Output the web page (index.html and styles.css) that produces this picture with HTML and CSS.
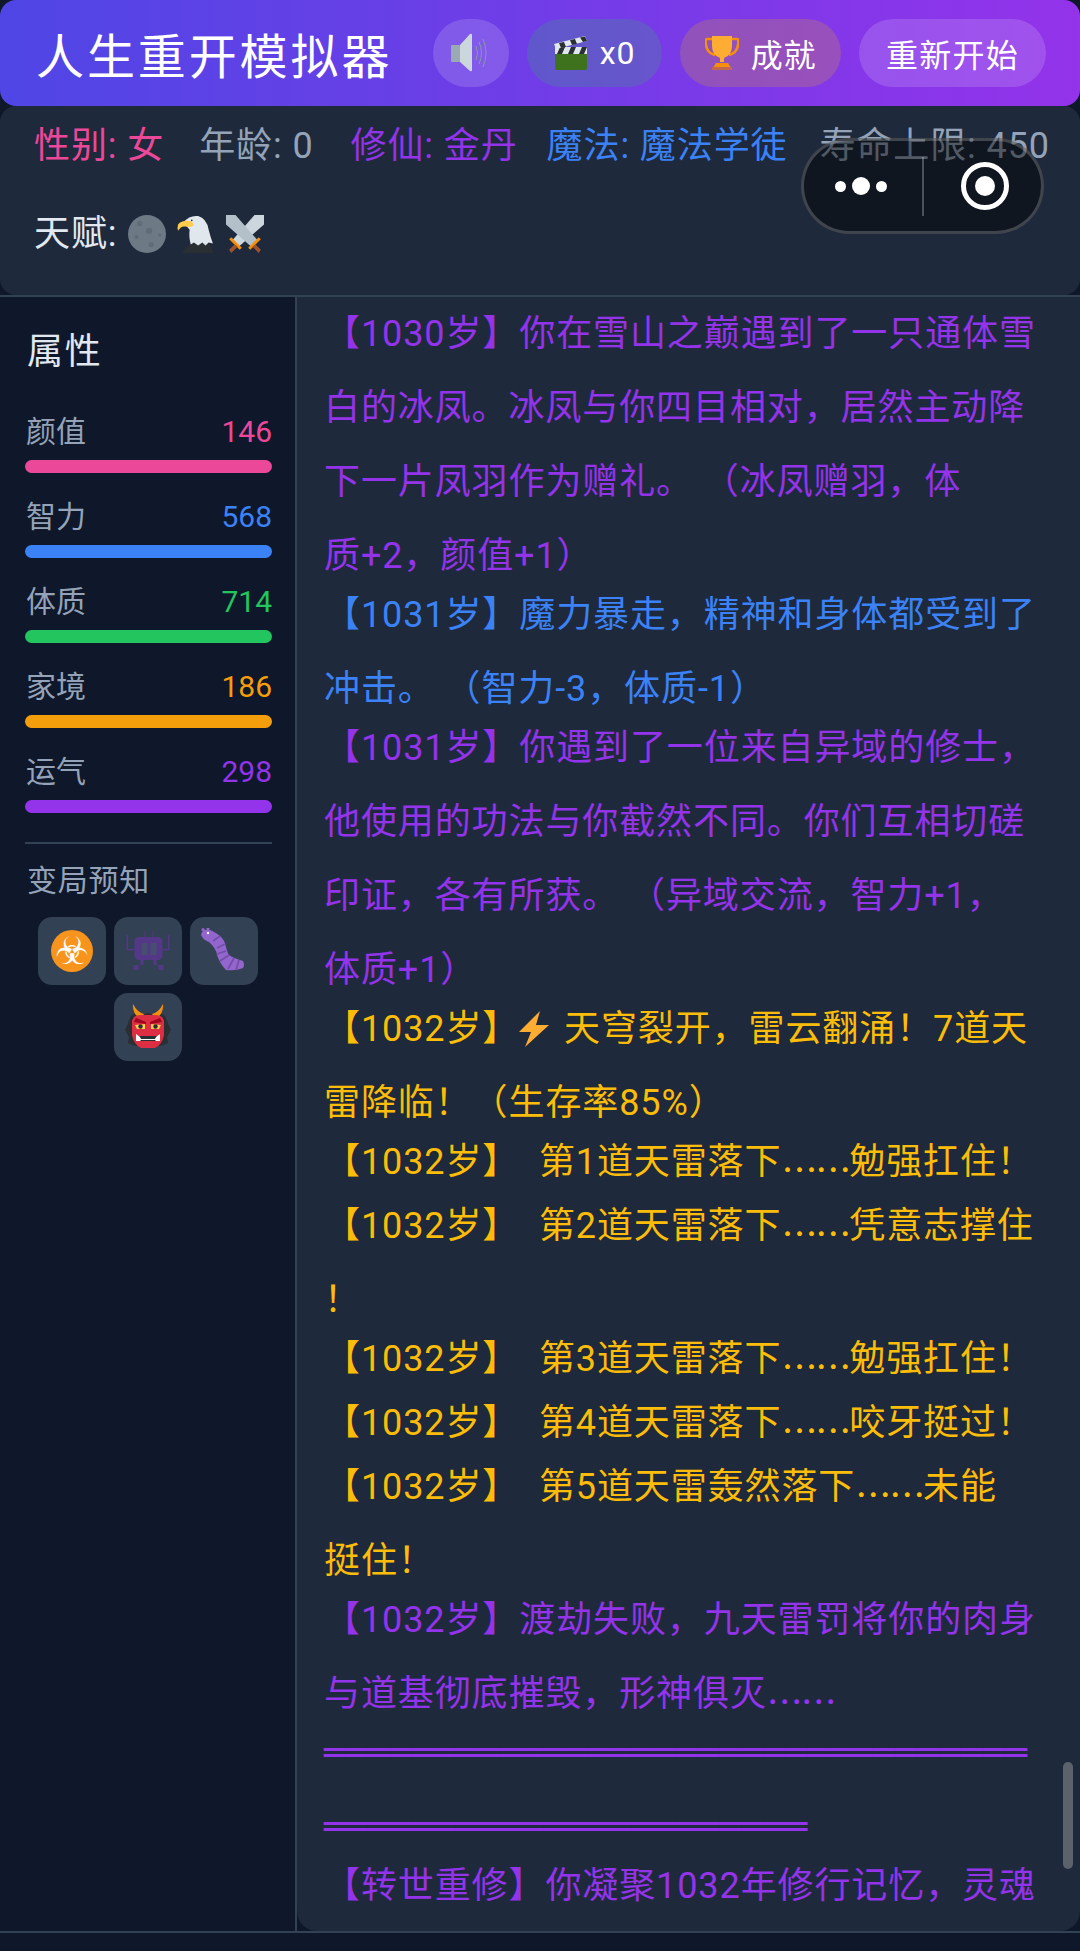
FILE: index.html
```html
<!DOCTYPE html>
<html lang="zh-CN">
<head>
    <meta charset="UTF-8">
    <meta name="viewport" content="width=device-width, initial-scale=1.0">
    <title>人生重开模拟器</title>
    <link rel="stylesheet" href="styles.css">
</head>
<body>
    <div class="app">
        <header class="top-bar">
            <h1 class="title">人生重开模拟器</h1>
            <div class="top-actions">
                <button class="btn btn-sound">
                    <svg class="ico-sound" viewBox="0 0 40 40">
                        <rect x="0" y="12" width="9" height="17" rx="1" fill="#99aab5"/>
                        <path d="M9 12 19 1Q21 0 21 2V37Q21 39 19 38L9 29Z" fill="#ccd6dd"/>
                        <path d="M25 13Q28 20 25 27M28 9Q33 20 28 31M32 6Q38 20 32 34" fill="none" stroke="#8899a6" stroke-width="1"/>
                    </svg>
                </button>
                <button class="btn btn-film">
                    <svg class="ico-md" viewBox="0 0 34 34">
                        <rect x="1" y="17" width="32" height="17" rx="2" fill="#3e721d"/>
                        <rect x="1" y="11" width="32" height="7" fill="#e1e8ed"/>
                        <path d="M6 11h5l-3 7H3zM17 11h5l-3 7h-5zM28 11h5l-3 7h-5z" fill="#292f33"/>
                        <path d="M0 8 31 0l2 5L2 13z" fill="#e1e8ed"/>
                        <path d="M5 7l5-1 2 5-5 1zM16 4l5-1 2 5-5 1zM26 1.500l5-1 2 4.500-4 1z" fill="#292f33"/>
                    </svg>
                    <span>x0</span>
                </button>
                <button class="btn btn-trophy">
                    <svg class="ico-md" viewBox="0 0 34 34">
                        <path d="M8 3H2Q0 3 1 9 2 17 10 19" fill="none" stroke="#f4900c" stroke-width="2.600"/>
                        <path d="M26 3h6q2 0 1 6-1 8-9 10" fill="none" stroke="#f4900c" stroke-width="2.600"/>
                        <path d="M7 0H27V10Q27 19 19 22V26H15V22Q7 19 7 10Z" fill="#ffac33"/>
                        <path d="M11 27H23L26 32H8Z" fill="#f4900c"/>
                        <rect x="7" y="31" width="20" height="3" fill="#c1694f"/>
                    </svg>
                    <span>成就</span>
                </button>
                <button class="btn btn-restart">重新开始</button>
            </div>
        </header>

        <section class="status">
            <div class="status-row">
                <span class="c-pink">性别: 女</span>
                <span class="c-gray st-age">年龄: 0</span>
                <span class="c-purple">修仙: 金丹</span>
                <span class="c-blue st-magic">魔法: 魔法学徒</span>
                <span class="c-gray">寿命上限: 450</span>
            </div>
            <div class="talents">
                <span>天赋:</span>
                <svg class="ico-talent" viewBox="0 0 36 36">
                    <circle cx="18" cy="18" r="18" fill="#6d7a85"/>
                    <circle cx="11" cy="8" r="2.500" fill="#5f6c79"/>
                    <circle cx="20" cy="15" r="3" fill="#5f6c79"/>
                    <circle cx="8" cy="21" r="2" fill="#5f6c79"/>
                    <circle cx="22" cy="28" r="2.500" fill="#5f6c79"/>
                    <circle cx="30" cy="19" r="1.500" fill="#5f6c79"/>
                </svg>
                <svg class="ico-talent" viewBox="0 0 36 36">
                    <path d="M5 36Q7 30 13 28L16 26 20 29 24 26 27 29 30 26Q33 30 35 36Z" fill="#292f33"/>
                    <path d="M6 7Q12 0 20 1 28 3 30 14 32 22 34 27L30 26 27 29 24 26 20 29 16 26 13 28Q11 20 12 14Z" fill="#e1e8ed"/>
                    <path d="M14 6Q5 4 1 9 0 12 1 15 4 10 8 11 13 12 16 10Z" fill="#ffcc4d"/>
                    <circle cx="14" cy="5" r="0.800" fill="#292f33"/>
                </svg>
                <svg class="ico-talent" viewBox="0 0 36 36">
                    <path d="M36 0H27L6 24 12 30 36 9Z" fill="#ccd6dd"/>
                    <path d="M0 0H9L30 24 24 30 0 9Z" fill="#b4c0c9"/>
                    <path d="M5 21 15 31 13 33 3 23ZM31 21 21 31 23 33 33 23Z" fill="#f4900c"/>
                    <path d="M8 28 3 33 5 36 11 30ZM28 28 33 33 31 36 25 30Z" fill="#a0522d"/>
                </svg>
            </div>
        </section>

        <div class="capsule">
            <div class="capsule-dots"><i></i><i class="big"></i><i></i></div>
            <div class="capsule-line"></div>
            <svg class="capsule-target" viewBox="0 0 50 50">
                <circle cx="25" cy="25" r="21.500" fill="none" stroke="#fff" stroke-width="5"/>
                <circle cx="25" cy="25" r="10" fill="#fff"/>
            </svg>
        </div>

        <main class="main">
            <aside class="sidebar">
                <h2 class="side-title">属性</h2>
                <div class="stat">
                    <div class="stat-head"><span>颜值</span><span class="c-pink">146</span></div>
                    <div class="bar bg-pink"></div>
                </div>
                <div class="stat">
                    <div class="stat-head"><span>智力</span><span class="c-blue">568</span></div>
                    <div class="bar bg-blue"></div>
                </div>
                <div class="stat">
                    <div class="stat-head"><span>体质</span><span class="c-green">714</span></div>
                    <div class="bar bg-green"></div>
                </div>
                <div class="stat">
                    <div class="stat-head"><span>家境</span><span class="c-orange">186</span></div>
                    <div class="bar bg-orange"></div>
                </div>
                <div class="stat">
                    <div class="stat-head"><span>运气</span><span class="c-purple">298</span></div>
                    <div class="bar bg-purple"></div>
                </div>
                <div class="omens">
                    <h3 class="omens-title">变局预知</h3>
                    <div class="omen-list">
                        <div class="omen"><span class="biohazard">☣</span></div>
                        <div class="omen">
                            <svg class="ico-omen" viewBox="-1.500 -3 46 46">
                                <path d="M11 6H33L36 9V26L33 29H11L8 26V9Z" fill="#553788"/>
                                <rect x="15" y="12" width="6" height="12" fill="#46506e"/>
                                <rect x="24" y="12" width="6" height="12" fill="#46506e"/>
                                <path d="M0 4H1.600V18H8V19.600H0ZM41.400 4H43V19.600H36V18H41.400ZM18 0H19V6H18ZM26 0H27V6H26ZM14 29H17V34H12V39H7V34H14ZM27 29H30V34H37V39H32V34H27Z" fill="#553788"/>
                            </svg>
                        </div>
                        <div class="omen">
                            <svg class="ico-omen" viewBox="0 0 46 46">
                                <path d="M3 2Q9 1 13 4 21 8 24 15 26 24 28 27 32 30 42 33 44 37 42 40 35 43 25 42 19 36 16 27 15 20 8 14 2 12 0 7 0 4 3 2Z" fill="#9266cc"/>
                                <path d="M19 8 12 13M24 16 16 20M25 23 16 26M28 27 19 33M33 30 27 41M38 32 35 42" stroke="#744eaa" stroke-width="1.800" fill="none"/>
                                <circle cx="2" cy="1.500" r="1.500" fill="#9266cc"/>
                                <circle cx="7" cy="0.800" r="1.500" fill="#9266cc"/>
                                <circle cx="7" cy="5" r="1.200" fill="#f5f8fa"/>
                            </svg>
                        </div>
                        <div class="omen">
                            <svg class="ico-omen" viewBox="0 0 46 46">
                                <path d="M6 12 12 8 17 11 23 9 29 11 34 8 40 12 43 19 46 26 42 33 43 39 36 42H10L3 39 4 33 0 26 3 19Z" fill="#292f33"/>
                                <path d="M15 15Q7 9 8 0 12 8 19 10ZM31 15Q39 9 38 0 34 8 27 10Z" fill="#f4900c"/>
                                <path d="M7 17Q8 11 16 11H30Q38 11 39 17V31Q37 41 30 44H16Q9 41 7 31Z" fill="#dd2e44"/>
                                <path d="M10 21 20 20V25H12ZM36 21 26 20V25H34Z" fill="#ffcc4d"/>
                                <circle cx="15.500" cy="22.500" r="2.200" fill="#292f33"/>
                                <circle cx="30.500" cy="22.500" r="2.200" fill="#292f33"/>
                                <path d="M9 18 21 20V18L11 14ZM37 18 25 20V18L35 14Z" fill="#a0041e"/>
                                <path d="M12 32 34 32V37H12Z" fill="#292f33"/>
                                <path d="M11 30 15 33 16 35 30 35 31 33 35 30 35 37H31L30 36H16L15 37H11Z" fill="#fff"/>
                            </svg>
                        </div>
                    </div>
                </div>
            </aside>

            <div class="log">
                <p class="c-purple">【1030岁】你在雪山之巅遇到了一只通体雪白的冰凤。冰凤与你四目相对，居然主动降下一片凤羽作为赠礼。 （冰凤赠羽，体<br>质+2，颜值+1）</p>
                <p class="c-blue">【1031岁】魔力暴走，精神和身体都受到了冲击。 （智力-3，体质-1）</p>
                <p class="c-purple">【1031岁】你遇到了一位来自异域的修士，他使用的功法与你截然不同。你们互相切磋印证，各有所获。 （异域交流，智力+1，体质+1）</p>
                <p class="c-amber">【1032岁】<svg class="ico-bolt" viewBox="0 0 30 36"><path d="M21 0 0 21H12L6 36 30 14H17Z" fill="#ffac33"/></svg> 天穹裂开，雷云翻涌！7道天雷降临！（生存率85%）</p>
                <p class="c-amber single">【1032岁】  第1道天雷落下<span class="dots">……</span>勉强扛住！</p>
                <p class="c-amber">【1032岁】  第2道天雷落下<span class="dots">……</span>凭意志撑住<br>！</p>
                <p class="c-amber single">【1032岁】  第3道天雷落下<span class="dots">……</span>勉强扛住！</p>
                <p class="c-amber single">【1032岁】  第4道天雷落下<span class="dots">……</span>咬牙挺过！</p>
                <p class="c-amber">【1032岁】  第5道天雷轰然落下<span class="dots">……</span>未能<br>挺住！</p>
                <p class="c-purple">【1032岁】渡劫失败，九天雷罚将你的肉身与道基彻底摧毁，形神俱灭<span class="dots">……</span></p>
                <p class="c-purple rule">════════════════════════════════<br>══════════════════════</p>
                <p class="c-purple">【转世重修】你凝聚1032年修行记忆，灵魂</p>
                <div class="scroll-thumb"></div>
            </div>
        </main>
    </div>
</body>
</html>
```

FILE: styles.css
```css
* {
    box-sizing: border-box;
}

body {
    margin: 0;
    background-color: #0f172a;
    font-family: Roboto, "Noto Sans CJK SC", sans-serif;
    color: #e2e8f0;
}

.app {
    position: relative;
    display: flex;
    flex-direction: column;
    height: 1951px;
    overflow: hidden;
}

.c-pink { color: #ec4899; }
.c-gray { color: #94a3b8; }
.c-purple { color: #9333ea; }
.c-blue { color: #3b82f6; }
.c-green { color: #22c55e; }
.c-orange { color: #f59e0b; }
.c-amber { color: #fbbc0a; }

.bg-pink { background-color: #ec4899; }
.bg-blue { background-color: #3b82f6; }
.bg-green { background-color: #22c55e; }
.bg-orange { background-color: #f59e0b; }
.bg-purple { background-color: #9333ea; }

.top-bar {
    display: flex;
    justify-content: space-between;
    align-items: center;
    flex: none;
    height: 106px;
    padding: 0 34px 0 36px;
    background: linear-gradient(90deg, #4f46e5, #9333ea);
    border-radius: 16px;
}

.title {
    margin: 0;
    font-size: 48px;
    font-weight: 400;
    letter-spacing: 2.900px;
    color: #fff;
}

.top-actions {
    display: flex;
    gap: 18px;
}

.btn {
    display: flex;
    align-items: center;
    justify-content: center;
    gap: 12px;
    height: 68px;
    padding: 0;
    border: none;
    border-radius: 34px;
    font-family: inherit;
    font-size: 32px;
    letter-spacing: 0.800px;
    color: #fff;
}

.btn-sound {
    width: 76px;
    background-color: rgba(255, 255, 255, 0.15);
}

.btn-film {
    width: 135px;
    background-color: rgba(34, 197, 94, 0.2);
}

.btn-trophy {
    width: 161px;
    background-color: rgba(234, 179, 8, 0.2);
}

.btn-restart {
    width: 187px;
    letter-spacing: 1.200px;
    background-color: rgba(255, 255, 255, 0.15);
}

.ico-sound {
    width: 40px;
    height: 40px;
}

.ico-md {
    width: 34px;
    height: 34px;
}

.status {
    flex: none;
    height: 189px;
    padding: 18px 34px 0;
    background-color: #1e293b;
    border-radius: 16px;
    font-size: 36px;
    letter-spacing: 0.900px;
}

.status-row {
    display: flex;
    gap: 35px;
    white-space: nowrap;
    line-height: 44px;
}

.st-age {
    margin-right: 2px;
}

.st-magic {
    margin: 0 -3px 0 -6px;
}

.talents {
    display: flex;
    align-items: center;
    gap: 11px;
    margin-top: 44px;
    line-height: 44px;
}

.ico-talent {
    width: 38px;
    height: 38px;
}

.capsule {
    position: absolute;
    top: 138px;
    left: 801px;
    display: flex;
    align-items: center;
    width: 243px;
    height: 96px;
    border: 3px solid rgba(255, 255, 255, 0.2);
    border-radius: 48px;
    background-color: rgba(0, 0, 0, 0.45);
}

.capsule-dots {
    display: flex;
    align-items: center;
    gap: 6px;
    margin-left: 31px;
}

.capsule-dots i {
    width: 11px;
    height: 11px;
    border-radius: 50%;
    background-color: #fff;
}

.capsule-dots i.big {
    width: 18px;
    height: 18px;
}

.capsule-line {
    width: 2px;
    height: 59px;
    margin-left: 35px;
    background-color: rgba(255, 255, 255, 0.25);
}

.capsule-target {
    width: 50px;
    height: 50px;
    margin-left: 36px;
}

.main {
    display: flex;
    flex: none;
    height: 1638px;
    border-top: 2px solid #334155;
    border-bottom: 2px solid #334155;
}

.sidebar {
    flex: none;
    width: 297px;
    padding: 0 23px 0 25px;
    border-right: 2px solid #334155;
}

.side-title {
    margin: 30px 0 34px 2px;
    font-size: 36px;
    font-weight: 400;
    line-height: 50px;
    letter-spacing: 1.800px;
    color: #e2e8f0;
}

.stat {
    margin-bottom: 23px;
}

.stat-head {
    display: flex;
    justify-content: space-between;
    padding: 0 0 0 1px;
    font-size: 30px;
    line-height: 42px;
    color: #94a3b8;
    margin-bottom: 7px;
}

.bar {
    height: 13px;
    border-radius: 7px;
}

.omens {
    margin-top: 29px;
    padding-top: 16px;
    border-top: 2px solid #334155;
}

.omens-title {
    margin: 0 0 15px 2px;
    font-size: 30px;
    font-weight: 400;
    line-height: 42px;
    letter-spacing: 0.750px;
    color: #94a3b8;
}

.omen-list {
    display: flex;
    flex-wrap: wrap;
    justify-content: center;
    gap: 8px;
    margin-left: -1px;
}

.omen {
    display: flex;
    align-items: center;
    justify-content: center;
    width: 68px;
    height: 68px;
    border-radius: 14px;
    background-color: #334155;
}

.biohazard {
    display: flex;
    align-items: center;
    justify-content: center;
    width: 42px;
    height: 42px;
    border-radius: 50%;
    background-color: #f7941d;
    font-family: "DejaVu Sans", sans-serif;
    font-size: 38px;
    line-height: 1;
    color: #fff;
}

.ico-omen {
    width: 46px;
    height: 46px;
}

.log {
    position: relative;
    flex: 1;
    padding: 0 40px 0 27px;
    background-color: #1e293b;
    border-radius: 0 0 20px 20px;
    overflow: hidden;
    font-size: 36px;
    letter-spacing: 0.900px;
    line-height: 74px;
}

.log p {
    margin: 0 0 -15px;
    white-space: pre-wrap;
}

.log p.single {
    margin-bottom: -10px;
}

.log p.rule {
    font-family: "DejaVu Sans", sans-serif;
    letter-spacing: 0.300px;
    white-space: nowrap;
}

.dots {
    font-family: "Noto Sans CJK SC", sans-serif;
    line-height: 0;
    letter-spacing: -2.100px;
    vertical-align: -10px;
}

.ico-bolt {
    width: 30px;
    height: 36px;
    margin-right: 5px;
    vertical-align: -6px;
}

.scroll-thumb {
    position: absolute;
    top: 1465px;
    right: 7px;
    width: 10px;
    height: 107px;
    border-radius: 5px;
    background-color: #5b626c;
}
```
